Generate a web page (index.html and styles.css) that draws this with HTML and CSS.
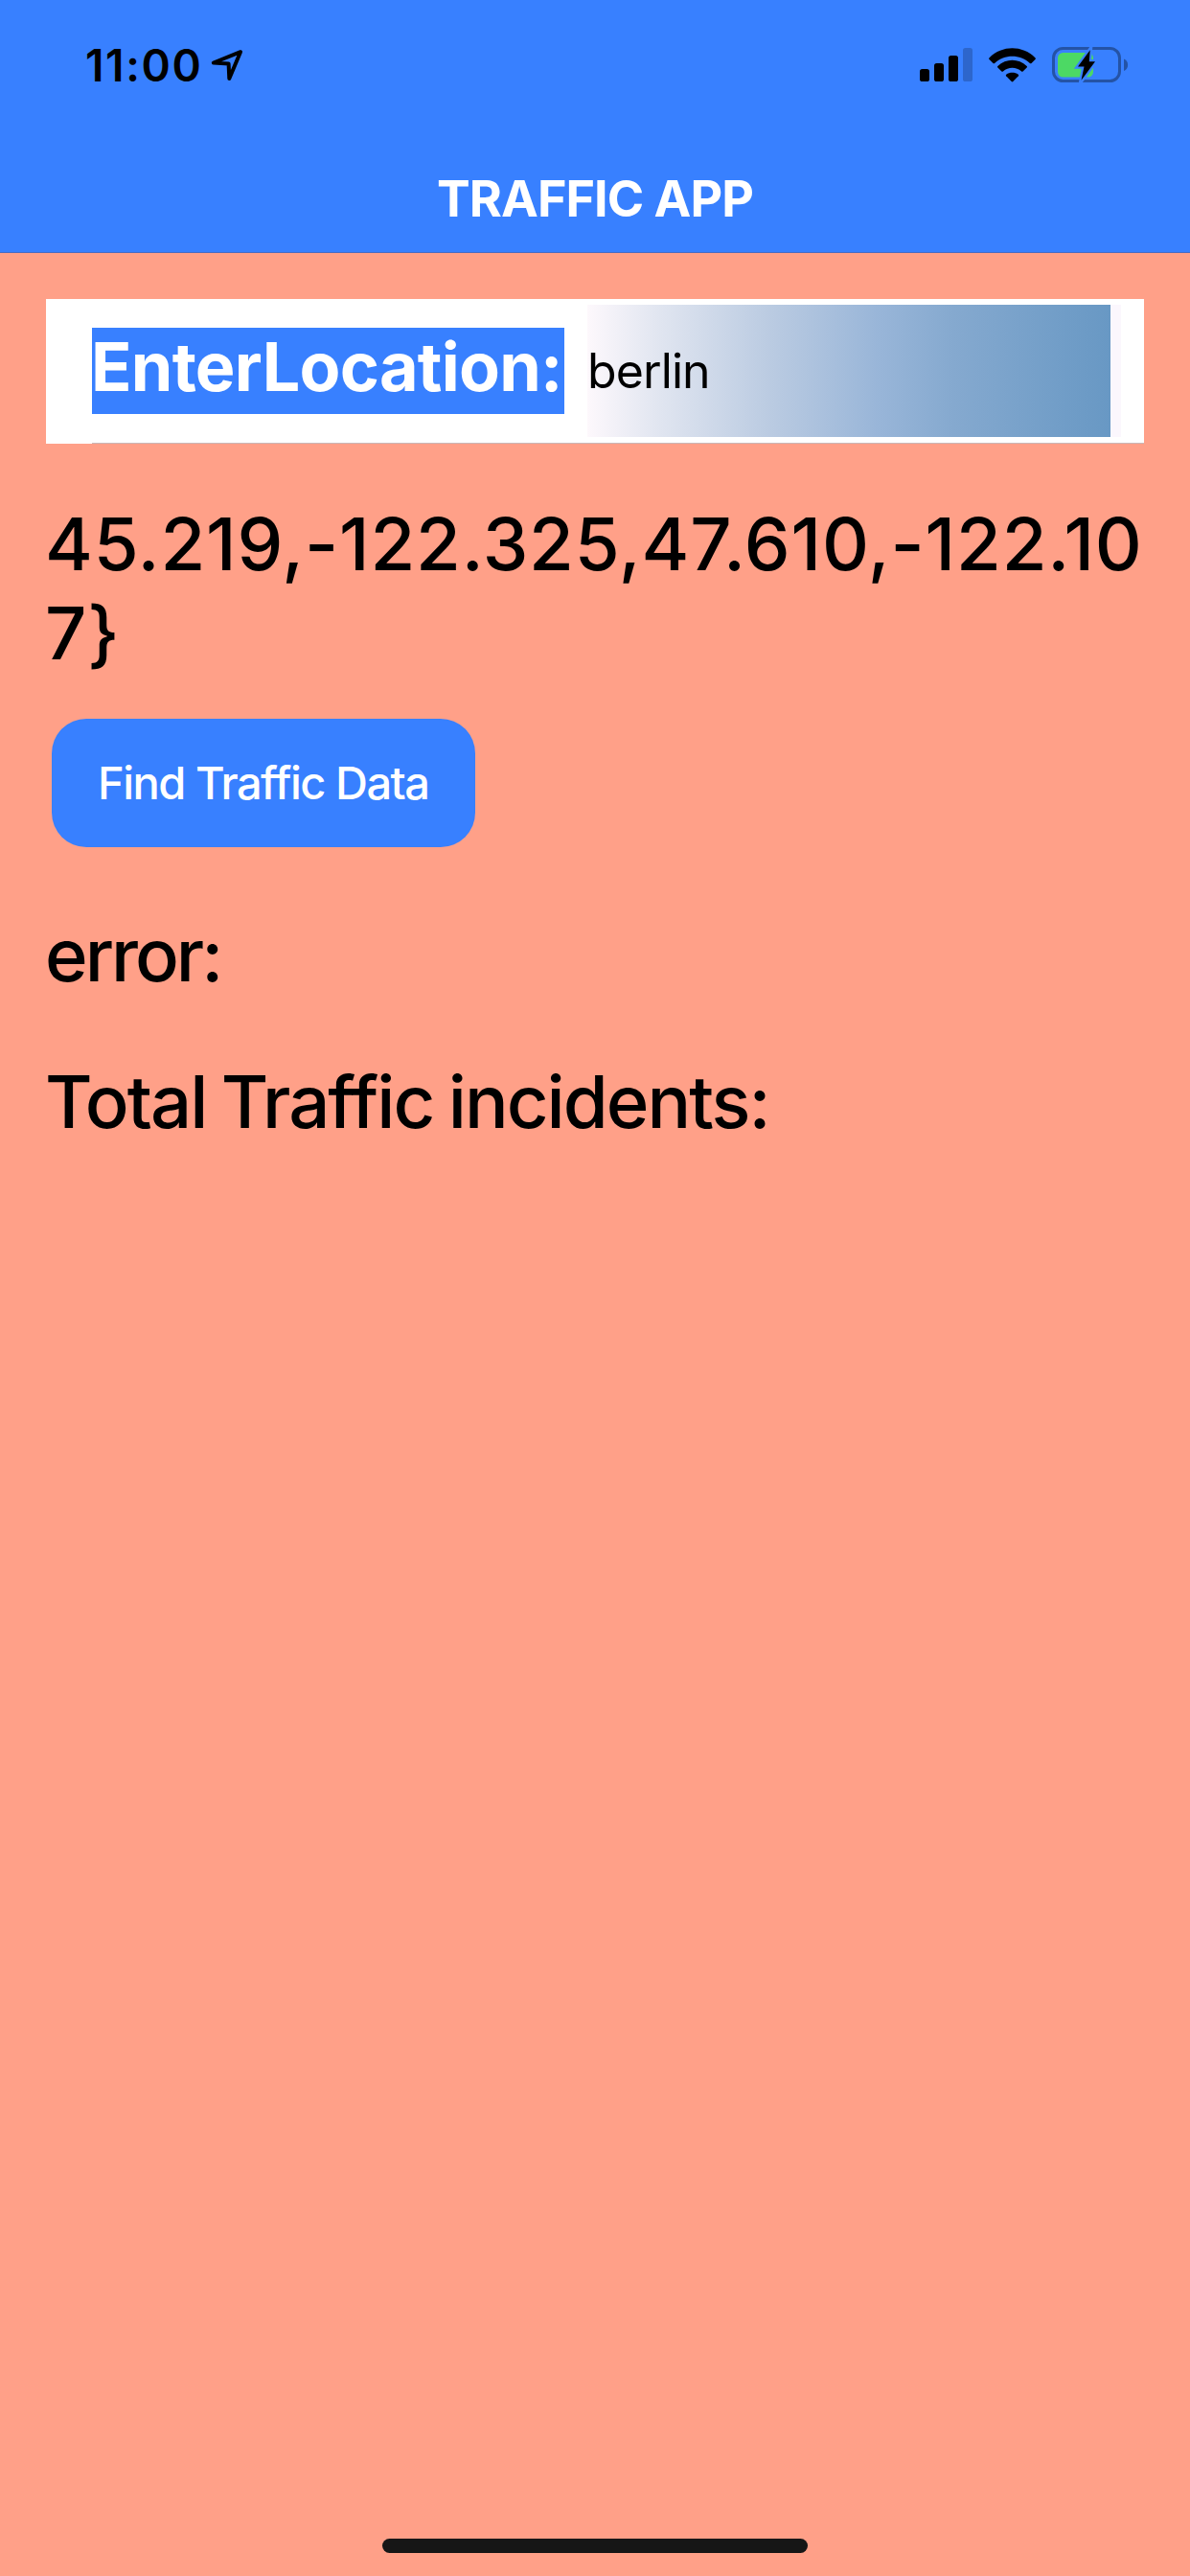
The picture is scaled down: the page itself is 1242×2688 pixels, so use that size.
FILE: index.html
```html
<!DOCTYPE html>
<html lang="en">
<head>
<meta charset="utf-8">
<title>Traffic App</title>
<link rel="stylesheet" href="styles.css">
</head>
<body>
<div class="screen">
  <header class="header">
    <div class="status">
      <span class="time">11:00</span>
      <svg class="location" width="34" height="34" viewBox="0 0 34 34"><path d="M31 3.2 2.8 14.5 18.6 15.6 19.3 31 31 3.2Z" fill="none" stroke="#000" stroke-width="4" stroke-linejoin="round"/></svg>
      <div class="indicators">
        <svg width="55" height="36" viewBox="0 0 55 36">
          <rect x="0" y="22" width="10" height="13" rx="2.6"/>
          <rect x="15" y="16" width="10" height="19" rx="2.6"/>
          <rect x="30" y="8" width="10" height="27" rx="2.6"/>
          <rect x="45" y="0" width="10" height="35" rx="2.6" fill="#2d66cc"/>
        </svg>
        <svg width="49" height="36" viewBox="0 0 49 36">
          <path d="M.6 10.2C14-3 35-3 48.400 10.200 49 10.800 49 11.400 48.500 12L44.500 16Q43.700 16.700 42.900 16C32.500 6.300 16.500 6.300 6.100 16Q5.300 16.700 4.500 16L.5 12C0 11.400 0 10.800.6 10.200Z"/>
          <path d="M9.300 19C18 10.600 31 10.600 39.700 19Q40.400 19.700 39.700 20.500L35.600 24.500Q34.900 25.200 34.100 24.500C28.600 19.600 20.400 19.600 14.900 24.500Q14.100 25.200 13.400 24.500L9.300 20.500Q8.600 19.700 9.300 19Z"/>
          <path d="M18.200 27.700C21.900 25.200 27.100 25.200 30.800 27.700Q31.600 28.400 30.900 29.200L25.300 35Q24.500 35.800 23.700 35L18.100 29.200Q17.400 28.400 18.200 27.700Z"/>
        </svg>
        <svg width="80" height="38" viewBox="0 0 80 38">
          <rect x="1.500" y="1.500" width="69" height="34" rx="10" fill="none" stroke="#2453a6" stroke-width="3"/>
          <path d="M75 12.500C80.500 14.500 80.500 23 75 25Z" fill="#2453a6"/>
          <rect x="6" y="6" width="37" height="25.500" rx="5.500" fill="#4cd964"/>
          <path d="M39.700 3.300 27.300 20.500 33.500 20.500 30.700 34.700 44.700 15.200 38.500 15.200Z" fill="#3880ff" stroke="#3880ff" stroke-width="4.600" stroke-miterlimit="12"/>
          <path d="M39.700 3.300 27 20.500 33.500 20.500 30.500 34.700 45 15.200 38.800 15.200Z"/>
        </svg>
      </div>
    </div>
    <h1 class="title">TRAFFIC APP</h1>
  </header>
  <main class="content">
    <div class="item">
      <label class="label" for="place">EnterLocation:</label>
      <div class="field"><input class="input" id="place" value="berlin"></div>
    </div>
    <p class="text coords">45.219,-122.325,47.610,-122.107}</p>
    <button class="button">Find Traffic Data</button>
    <p class="text error">error:</p>
    <p class="text total">Total Traffic incidents:</p>
  </main>
  <div class="home"></div>
</div>
</body>
</html>
```
FILE: styles.css
```css
* { box-sizing: border-box; }
body { margin: 0; font-family: Inter, "Liberation Sans", sans-serif; color: #000; }
svg { display: block; flex: none; }
.screen { display: flex; flex-direction: column; width: 1242px; height: 2688px; background: #ffa088; }
.header { height: 264px; background: #3880ff; border-bottom: 1px solid #4a6cc0; }
.status { display: flex; align-items: center; height: 135px; padding: 0 64px 0 89px; }
.time { width: 131px; font-size: 46px; font-weight: 600; line-height: 56px; letter-spacing: 1.65px; }
.indicators { display: flex; align-items: center; gap: 17px; margin-left: auto; }
.title { margin: 17px 0 0; color: #fff; font-size: 52px; font-weight: 700; line-height: 112px; letter-spacing: -0.96px; text-align: center; }
.content { flex: 1; padding: 48px; }
.item { display: flex; align-items: center; height: 151px; padding-left: 48px; background: linear-gradient(#c9b8b8, #c9b8b8) 48px 100% / 100% 1px no-repeat, #fff; }
.label { width: 493px; height: 90px; margin: 0 24px 1px 0; background: #3880ff; color: #fff; font-size: 70px; font-weight: 700; line-height: 81px; letter-spacing: -0.73px; text-indent: -1px; white-space: nowrap; }
.field { width: 557px; height: 138px; margin-bottom: 1px; padding-right: 11px; background: #fbf7fd; }
.input { display: block; width: 546px; height: 138px; padding: 0; border: 0; border-radius: 0; outline: 0; background: linear-gradient(90deg, #fdf8fc 0%, #e0e5f0 14%, #bccce2 34%, #98b5d8 56%, #85a9cf 70%, #6898c4 100%); color: #000; font: 400 50px Inter, "Liberation Sans", sans-serif; letter-spacing: -0.9px; }
.text { margin: 0 0 0 -1px; font-size: 76px; font-weight: 500; line-height: 93px; letter-spacing: -1.95px; }
.coords { margin-top: 58px; letter-spacing: 0.83px; word-break: break-all; }
.button { display: block; width: 442px; height: 134px; margin: 43px 0 0 6px; padding: 0 0 1px 48px; border: 0; border-radius: 36px; background: #3880ff; color: #fff; font: 500 47px Inter, "Liberation Sans", sans-serif; letter-spacing: -1.5px; text-align: left; white-space: nowrap; }
.error { margin-top: 66px; letter-spacing: -3px; }
.total { margin-top: 60px; word-spacing: -3px; }
.home { width: 444px; height: 15px; margin: 0 auto 24px; border-radius: 8px; background: #161616; }
```
